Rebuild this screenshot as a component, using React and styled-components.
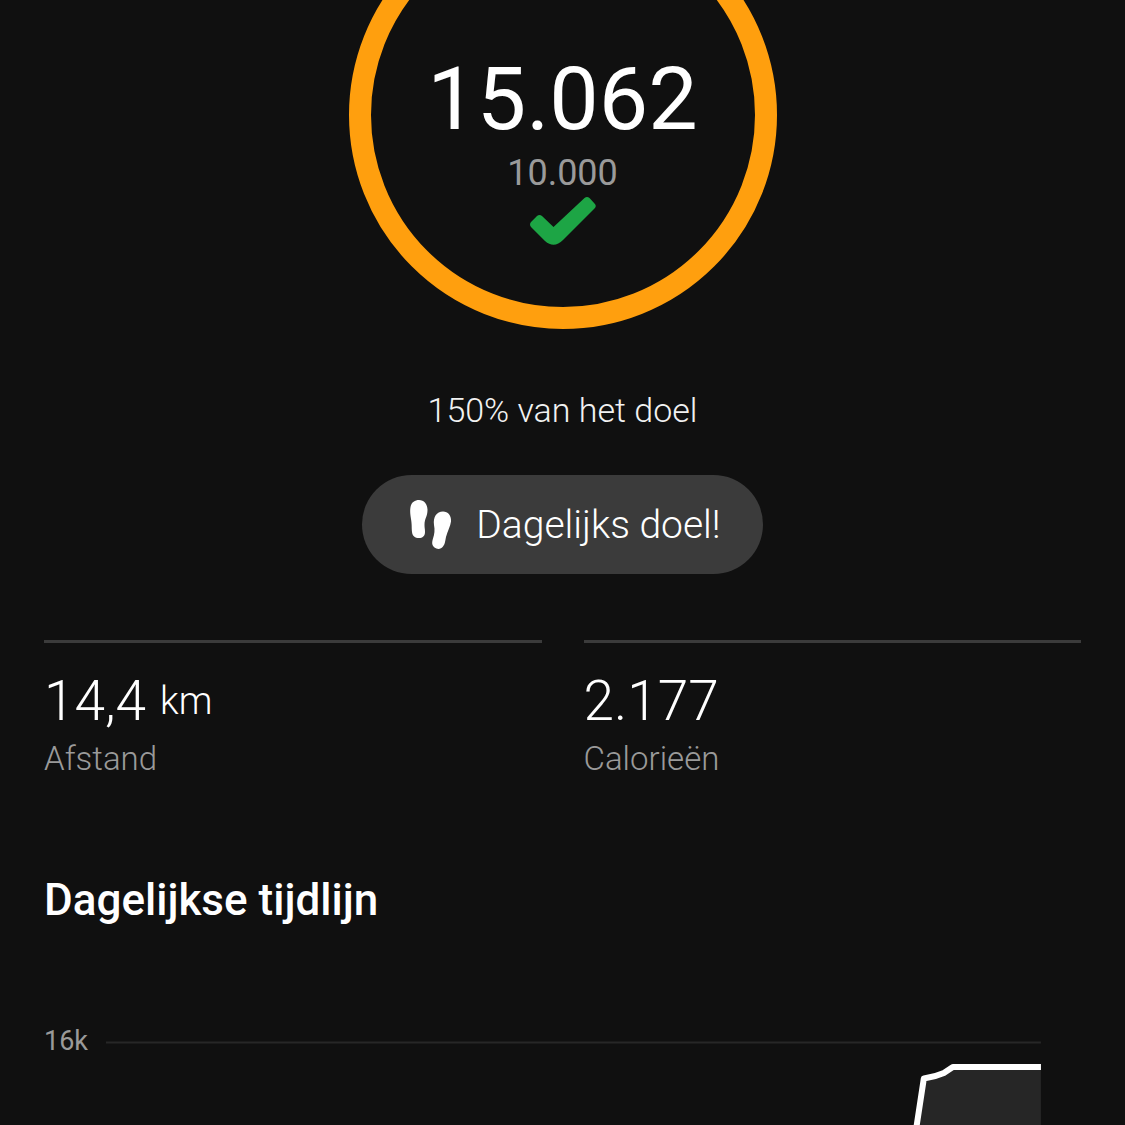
import React from "react";
import styled, { createGlobalStyle } from "styled-components";

const GlobalStyle = createGlobalStyle`
  *, *::before, *::after { box-sizing: border-box; }
  body {
    margin: 0;
    background: #101010;
    color: #ffffff;
    font-family: Roboto, "Noto Sans", sans-serif;
    font-weight: 300;
  }
`;

const Page = styled.main`
  display: flex;
  flex-direction: column;
  overflow: hidden;
`;

const Hero = styled.section`
  display: flex;
  flex-direction: column;
  align-items: center;
`;

const RingWindow = styled.div`
  display: flex;
  align-items: flex-end;
  height: 329px;
`;

const Ring = styled.div`
  display: flex;
  flex-direction: column;
  align-items: center;
  flex: none;
  width: 428px;
  height: 428px;
  padding-top: 124px;
  border: 22px solid #ff9f0e;
  border-radius: 50%;
`;

const Steps = styled.strong`
  font-size: 88px;
  line-height: 104px;
  font-weight: 400;
`;

const Target = styled.span`
  font-size: 36px;
  line-height: 44px;
  font-weight: 400;
  color: #9a9a9a;
`;

const CheckIcon = styled.svg`
  width: 66px;
  height: 50px;
  margin-top: 1px;
`;

const Progress = styled.p`
  margin: 60px 0 44px;
  font-size: 34px;
  line-height: 42px;
  color: #f2f2f2;
`;

const GoalButton = styled.button`
  display: flex;
  align-items: center;
  gap: 24px;
  height: 99px;
  padding: 0 42px 0 48px;
  border: 0;
  border-radius: 50px;
  background: #3b3b3b;
  color: #ffffff;
  font: inherit;
  font-size: 39px;
`;

const FeetIcon = styled.svg`
  width: 42px;
  height: 50px;
`;

const Stats = styled.dl`
  display: grid;
  grid-template-columns: 1fr 1fr;
  gap: 42px;
  margin: 66px 44px 0;
`;

const Stat = styled.div`
  display: flex;
  flex-direction: column-reverse;
  border-top: 3px solid #3b3b3b;
  padding-top: 23px;
`;

const StatLabel = styled.dt`
  font-size: 33px;
  line-height: 46px;
  color: #9a9a9a;
`;

const StatValue = styled.dd`
  display: flex;
  align-items: center;
  gap: 14px;
  margin: 0;
  font-size: 55px;
  line-height: 70px;
`;

const Unit = styled.span`
  font-size: 38px;
`;

const Title = styled.h2`
  margin: 91px 44px 0;
  font-size: 44px;
  line-height: 54px;
  font-weight: 500;
`;

const Chart = styled.section`
  display: flex;
  gap: 18px;
  margin: 98px 84px 0 44px;
`;

const AxisLabel = styled.span`
  font-size: 27px;
  line-height: 32px;
  font-weight: 400;
  color: #9a9a9a;
`;

const Plot = styled.svg`
  flex: 1;
  min-width: 0;
  height: 100px;
`;

const stats = [
  { label: "Afstand", value: "14,4", unit: "km" },
  { label: "Calorieën", value: "2.177" },
];

export default function App() {
  return (
    <Page>
      <GlobalStyle />
      <Hero>
        <RingWindow>
          <Ring>
            <Steps>15.062</Steps>
            <Target>10.000</Target>
            <CheckIcon viewBox="0 0 66 50" aria-hidden="true">
              <path
                d="M7 20Q9.500 18 12 20L23.500 31L54.500 2Q57 0 59.500 2L64.500 7.500Q67 10 64.500 12.500L33 44Q24 53 15 45L1 31Q-1 28.500 1 26Z"
                fill="#1da545"
              />
            </CheckIcon>
          </Ring>
        </RingWindow>
        <Progress>150% van het doel</Progress>
        <GoalButton type="button">
          <FeetIcon viewBox="0 0 42 50" fill="#ffffff" aria-hidden="true">
            <path d="M9 0C14 0 17.500 4 17.500 10C17.500 17 14.500 18 14.500 25C14.500 28 15 29 15 32C15 36 12.500 38 9 38C5 38 2.500 36 2 32C1.500 26 2 25 1 19C0 13 0 10 0.500 7C1.500 2 5 0 9 0Z" />
            <path d="M33 11.500C38 11.500 41.500 15.500 41 21.500C40.500 26 37.500 31 36 37C35 42 35 44 33 46.500C31 49.500 27 49.500 24.500 47.500C21.500 45 22 42 23 38.500C24.500 34 25 30 24 25C23 17 26.500 11.500 33 11.500Z" />
          </FeetIcon>
          Dagelijks doel!
        </GoalButton>
      </Hero>
      <Stats>
        {stats.map(({ label, value, unit }) => (
          <Stat key={label}>
            <StatLabel>{label}</StatLabel>
            <StatValue>
              {value}
              {unit && <Unit>{unit}</Unit>}
            </StatValue>
          </Stat>
        ))}
      </Stats>
      <Title>Dagelijkse tijdlijn</Title>
      <Chart aria-label="Dagelijkse tijdlijn">
        <AxisLabel>16k</AxisLabel>
        <Plot viewBox="0 0 934 100" preserveAspectRatio="xMaxYMin slice">
          <path d="M0 17.500H934" stroke="#272727" strokeWidth="2" />
          <path d="M809 106L817 53.500Q828 52 837 48L846 42H934V106Z" fill="#262626" />
          <path
            d="M809 106L817 53.500Q828 52 837 48L846 42H934"
            fill="none"
            stroke="#ffffff"
            strokeWidth="6"
            strokeLinejoin="round"
          />
        </Plot>
      </Chart>
    </Page>
  );
}
